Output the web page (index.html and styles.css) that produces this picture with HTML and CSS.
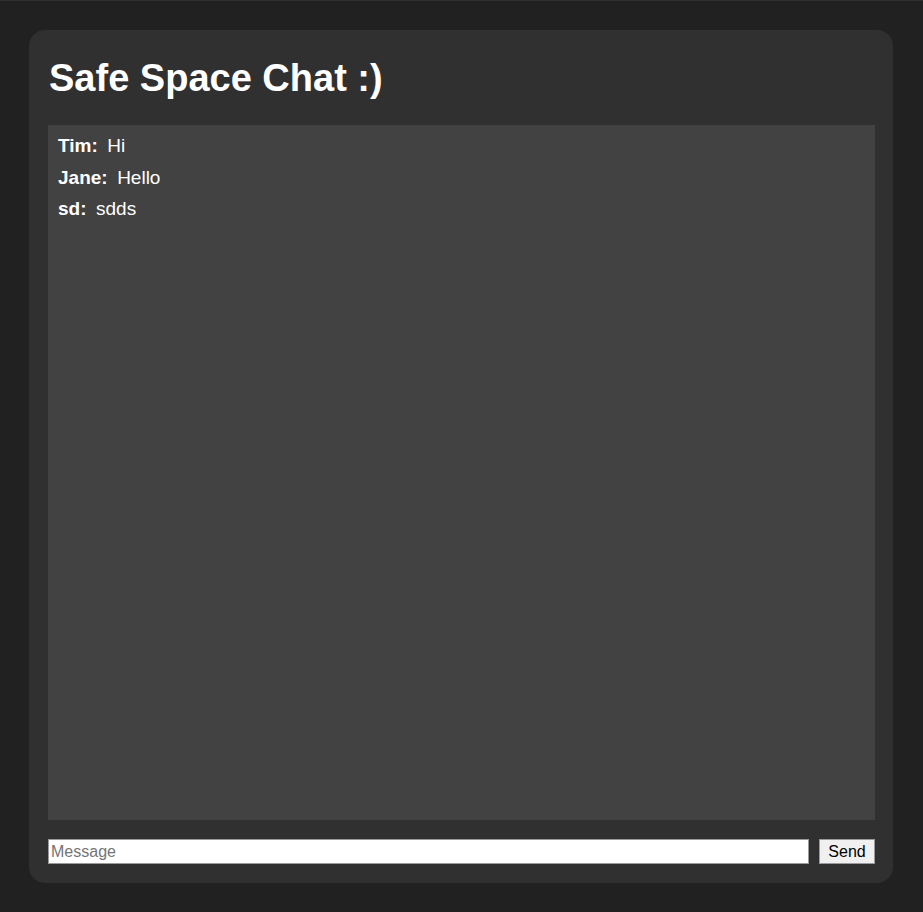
FILE: index.html
```html
<!DOCTYPE html>
<html lang="en">
<head>
<meta charset="utf-8">
<title>Safe Space Chat</title>
<link rel="stylesheet" href="styles.css">
</head>
<body>
<div class="topline"></div>
<main class="card">
  <h1 class="title">Safe Space Chat :)</h1>
  <section class="messages">
    <div class="msg"><span class="name">Tim:</span><span class="text">Hi</span></div>
    <div class="msg"><span class="name">Jane:</span><span class="text">Hello</span></div>
    <div class="msg"><span class="name">sd:</span><span class="text">sdds</span></div>
  </section>
  <form class="composer">
    <input class="input" type="text" placeholder="Message">
    <button class="send" type="button">Send</button>
  </form>
</main>
</body>
</html>
```
FILE: styles.css
```css
html, body {
  margin: 0;
  padding: 0;
  background: #212121;
  font-family: "Liberation Sans", Arial, sans-serif;
  height: 100%;
  overflow: hidden;
}
.topline {
  height: 1px;
  background: #2e2e2e;
}
.card {
  box-sizing: border-box;
  width: 864px;
  height: 853px;
  margin: 29px 30px 0 29px;
  background: #303030;
  border-radius: 16px;
  padding: 26px 18px 19px 19px;
  display: flex;
  flex-direction: column;
}
.title {
  margin: 0 0 25px 1px;
  font-size: 38px;
  font-weight: bold;
  line-height: 44px;
  color: #ffffff;
}
.messages {
  flex: 1;
  background: #424242;
  padding: 10px 10px;
  color: #ffffff;
  font-size: 19px;
}
.msg {
  line-height: 22px;
  margin-bottom: 9.5px;
  display: flex;
  gap: 9.5px;
}
.name {
  font-weight: bold;
}
.composer {
  margin: 19px 0 0 0;
  display: flex;
  gap: 10px;
}
.input {
  flex: 1;
  box-sizing: border-box;
  height: 25px;
  margin: 0;
  padding: 1px 2px;
  border: 1px solid #9a9a9a;
  background: #ffffff;
  font-family: "Liberation Sans", Arial, sans-serif;
  font-size: 16px;
  color: #000;
}
.input::placeholder {
  color: #757575;
}
.send {
  box-sizing: border-box;
  width: 56px;
  height: 25px;
  margin: 0;
  padding: 0 6px;
  border: 1px solid #9a9a9a;
  background: #f0f0f0;
  font-family: "Liberation Sans", Arial, sans-serif;
  font-size: 16px;
  color: #000;
}
```
